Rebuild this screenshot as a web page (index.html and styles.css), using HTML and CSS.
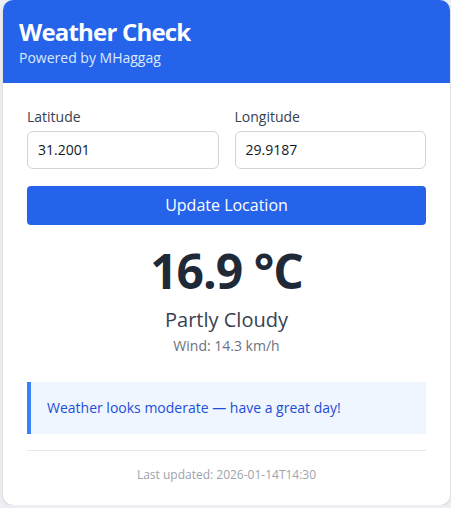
FILE: index.html
```html
<!DOCTYPE html>
<html lang="en">
<head>
<meta charset="utf-8">
<title>Weather Check</title>
<link rel="stylesheet" href="styles.css">
</head>
<body>
<div class="card">
  <header class="card-header">
    <h1 class="title">Weather Check</h1>
    <p class="subtitle">Powered by MHaggag</p>
  </header>
  <main class="card-body">
    <div class="coords">
      <label class="field">
        <span class="field-label">Latitude</span>
        <input class="field-input" type="text" value="31.2001">
      </label>
      <label class="field">
        <span class="field-label">Longitude</span>
        <input class="field-input" type="text" value="29.9187">
      </label>
    </div>
    <button class="update-btn" type="button">Update Location</button>
    <section class="weather">
      <div class="temp">16.9 °C</div>
      <div class="condition">Partly Cloudy</div>
      <div class="wind">Wind: 14.3 km/h</div>
    </section>
    <div class="advice">Weather looks moderate — have a great day!</div>
    <footer class="updated">Last updated: 2026-01-14T14:30</footer>
  </main>
</div>
</body>
</html>
```
FILE: styles.css
```css
* { box-sizing: border-box; }
html, body { margin: 0; padding: 0; }
body {
  background: #eceef1;
  font-family: "Open Sans", "Noto Sans", sans-serif;
  color: #1f2937;
  padding: 0 1px 0 3px;
}
.card {
  background: #ffffff;
  border-radius: 10px;
  overflow: hidden;
  box-shadow: 0 1px 3px rgba(0, 0, 0, 0.12);
}
.card-header {
  background: #2563eb;
  color: #ffffff;
  padding: 16px 16px 15px;
}
.title {
  margin: 0;
  font-size: 24px;
  line-height: 32px;
  font-weight: 700;
  letter-spacing: -0.8px;
}
.subtitle {
  margin: 0;
  font-size: 14px;
  line-height: 20px;
  color: #dbeafe;
}
.card-body {
  padding: 24px 24px 22px;
}
.coords {
  display: grid;
  grid-template-columns: 1fr 1fr;
  gap: 16px;
}
.field { display: flex; flex-direction: column; gap: 4px; }
.field-label {
  font-size: 14px;
  line-height: 20px;
  font-weight: 500;
  color: #374151;
}
.field-input {
  font: inherit;
  font-size: 14px;
  line-height: 20px;
  padding: 8px 10px;
  border: 1px solid #d1d5db;
  border-radius: 6px;
  color: #111827;
  width: 100%;
  background: #fff;
}
.update-btn {
  display: block;
  width: 100%;
  margin-top: 17px;
  font: inherit;
  font-size: 16px;
  font-weight: 500;
  line-height: 23px;
  padding: 8px;
  border: none;
  border-radius: 4px;
  background: #2563eb;
  color: #ffffff;
}
.weather {
  text-align: center;
  margin-top: 18px;
}
.temp {
  font-size: 48px;
  line-height: 56px;
  font-weight: 700;
  letter-spacing: -1px;
  color: #1f2937;
}
.condition {
  margin-top: 7px;
  font-size: 20px;
  line-height: 28px;
  color: #374151;
}
.wind {
  margin-top: 2px;
  font-size: 14px;
  line-height: 20px;
  color: #6b7280;
}
.advice {
  margin-top: 26px;
  background: #eff6ff;
  border-left: 4px solid #3b82f6;
  padding: 16px;
  font-size: 14px;
  line-height: 20px;
  color: #1d4ed8;
}
.updated {
  margin-top: 16px;
  border-top: 1px solid #e5e7eb;
  padding-top: 16px;
  text-align: center;
  font-size: 12px;
  line-height: 16px;
  color: #9ca3af;
}
```
